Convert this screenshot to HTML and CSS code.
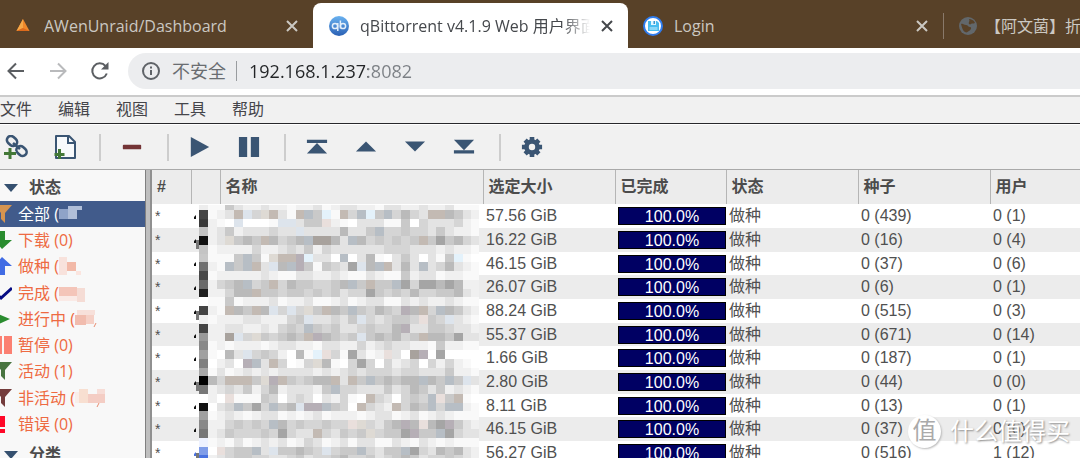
FILE: index.html
```html
<!DOCTYPE html>
<html lang="zh-CN">
<head>
<meta charset="utf-8">
<title>qBittorrent v4.1.9 Web 用户界面</title>
<link rel="stylesheet" href="styles.css">
</head>
<body>
<div class="app">
<header class="tabs">
  <div class="tab tab-first">
    <svg class="fav" viewBox="0 0 20 20"><path d="M10 3 16.500 15H3.500Z" fill="#f0882a"/><path d="M10 3v9l-6.500 3Z" fill="#f7a848"/><path d="M3.500 15 10 12l6.500 3Z" fill="#dc6a1c"/></svg>
    <span class="tab-title">AWenUnraid/Dashboard</span>
    <button class="close" aria-label="关闭"><svg viewBox="0 0 12 12"><path d="M1 1l10 10M11 1 1 11"/></svg></button>
  </div>
  <div class="tab tab-active">
    <svg class="fav" viewBox="0 0 20 20"><defs><linearGradient id="qb" x2="0" y2="1"><stop stop-color="#6ab2f0"/><stop offset="1" stop-color="#2a60b4"/></linearGradient></defs><circle cx="10" cy="10" r="10" fill="url(#qb)"/><g fill="none" stroke="#e4effa" stroke-width="1.500"><circle cx="6" cy="10" r="2.600"/><path d="M8.800 7v8M11.400 4.500v8"/><circle cx="14" cy="10" r="2.600"/></g></svg>
    <span class="tab-title">qBittorrent v4.1.9 Web 用户界面</span>
    <button class="close" aria-label="关闭"><svg viewBox="0 0 12 12"><path d="M1 1l10 10M11 1 1 11"/></svg></button>
  </div>
  <div class="tab tab-login">
    <svg class="fav" viewBox="0 0 20 20"><circle cx="10" cy="10" r="9" fill="#fff" stroke="#2f7df0" stroke-width="2"/><path d="M5 5h9l2 2v8H5Z" fill="#48bdf0"/><path d="M8 5h5v4H8Z" fill="#e4f6ff"/><path d="M10.500 5h1.500v3h-1.500Z" fill="#3796cf"/><path d="M6.500 11h8v3h-8Z" fill="#8ad7f7"/></svg>
    <span class="tab-title">Login</span>
    <button class="close" aria-label="关闭"><svg viewBox="0 0 12 12"><path d="M1 1l10 10M11 1 1 11"/></svg></button>
  </div>
  <div class="tab tab-last">
    <svg class="fav" viewBox="0 0 20 20"><circle cx="10" cy="10" r="9" fill="#62676b"/><path d="M3 8c2-1 3 1 5 1s2 2 4 2 1 3-1 4-2 2-4 1-3-4-4-8M11 3c2 0 5 1 6 4-2 1-3 0-4 1s-3 0-2-2 0-2 0-3" fill="#584128"/></svg>
    <span class="tab-title">【阿文菌】折腾</span>
  </div>
</header>
<div class="nav">
  <button class="nav-btn" aria-label="后退"><svg viewBox="0 0 20 20"><path d="M18 10H3M10 2.500 2.500 10l7.500 7.500"/></svg></button>
  <button class="nav-btn nav-off" aria-label="前进"><svg viewBox="0 0 20 20"><path d="M2 10h15M10 2.500l7.500 7.500-7.500 7.500"/></svg></button>
  <button class="nav-btn" aria-label="刷新"><svg viewBox="0 0 20 20"><path d="M16.800 12.500A7.500 7.500 0 1 1 15.500 5"/><path d="M18.500 1v7.500H11Z" class="solid"/></svg></button>
  <div class="address">
    <svg class="info" viewBox="0 0 18 18"><circle cx="9" cy="9" r="8"/><path d="M9 8v5M9 4.500v2"/></svg>
    <label class="insecure" for="url">不安全</label>
    <input class="url" id="url" type="text" value="192.168.1.237:8082">
  </div>
</div>
<nav class="menu">
  <button>文件</button><button>编辑</button><button>视图</button><button>工具</button><button>帮助</button>
</nav>
<div class="tools">
  <button class="tool" aria-label="添加链接"><svg viewBox="0 0 24 24"><g fill="none" stroke="#3a5573" stroke-width="2.600"><rect x="2.500" y="2" width="11" height="8" rx="4" transform="rotate(42 8 6)"/><rect x="12" y="12" width="11" height="8" rx="4" transform="rotate(42 17.500 16)"/><path d="m9 8 7 6"/></g><path d="M6 13v12M0 19h12" stroke="#f1f1f1" stroke-width="5"/><path d="M6 13v11M0 18.500h12" stroke="#437837" stroke-width="3"/></svg></button>
  <button class="tool" aria-label="添加文件"><svg viewBox="0 0 24 24"><path d="M3 1h13l6 6v16H3Z" fill="#f7f9fb" stroke="#3a5573" stroke-width="2" stroke-linejoin="round"/><path d="M15 1v7h7" fill="none" stroke="#3a5573" stroke-width="2"/><path d="M6.500 14v10M1.500 19.500h10" stroke="#437837" stroke-width="3"/></svg></button>
  <span class="sep"></span>
  <button class="tool" aria-label="删除"><svg viewBox="0 0 24 24"><rect x="2" y="9.500" width="20" height="5" rx="1" fill="#743436"/></svg></button>
  <span class="sep"></span>
  <button class="tool" aria-label="开始"><svg viewBox="0 0 24 24"><path d="M2 1v22l20-11Z"/></svg></button>
  <button class="tool" aria-label="暂停"><svg viewBox="0 0 24 24"><path d="M1 1h9v22H1zM14 1h9v22h-9z"/></svg></button>
  <span class="sep"></span>
  <button class="tool" aria-label="置顶"><svg viewBox="0 0 24 24"><path d="M1 4h22v3.500H1zM12 7.500 23 19H1Z"/></svg></button>
  <button class="tool" aria-label="上移"><svg viewBox="0 0 24 24"><path d="M12 6 23 17H1Z"/></svg></button>
  <button class="tool" aria-label="下移"><svg viewBox="0 0 24 24"><path d="M12 17 23 6H1Z"/></svg></button>
  <button class="tool" aria-label="置底"><svg viewBox="0 0 24 24"><path d="M1 15.500h22V19H1zM12 15.500 23 4H1Z"/></svg></button>
  <span class="sep"></span>
  <button class="tool" aria-label="设置"><svg viewBox="0 0 24 24"><circle cx="12" cy="12" r="6" fill="none" stroke="#3a5573" stroke-width="5"/><path d="M12 1v4M12 19v4M1 12h4M19 12h4M4.500 4.500l2.500 2.500M17 17l2.500 2.500M19.500 4.500 17 7M7 17l-2.500 2.500" stroke="#3a5573" stroke-width="5"/></svg></button>
</div>
<main class="main">
  <aside class="side">
    <h2 class="group"><svg viewBox="0 0 14 8"><path d="M0 0h14L7 8Z"/></svg>状态</h2>
    <ul class="filters">
      <li><a class="on" href="#"><svg class="ico" viewBox="0 0 12 18"><path d="M-6 0h18L5 8v10l-4-4V8Z" fill="#d59450"/></svg>全部 (<svg class="mask" viewBox="0 0 40 18"><path d="M0 4h18v10H0z" fill="#8fa3c8"/><path d="M9 1h14v4h-5v9H9z" fill="#b0bed8"/></svg></a></li>
      <li><a href="#"><svg class="ico" viewBox="0 0 12 18"><path d="M-1 0h6v9h7L2 18l-8-9h5Z" fill="#2a8c2f"/></svg>下载 (0)</a></li>
      <li><a href="#"><svg class="ico" viewBox="0 0 12 18"><path d="M-1 18h6V9h7L2 0l-8 9h5Z" fill="#416ce4"/></svg>做种 (<svg class="mask" viewBox="0 0 40 18"><path d="M-2 0h10v18H-2z" fill="#f8e2dc"/><path d="M8 5h9v9H8z" fill="#f2b9a8"/><path d="M17 14h5v4h-5z" fill="#fbe5df"/></svg></a></li>
      <li><a href="#"><svg class="ico" viewBox="0 0 12 18"><path d="M-4 10 1 14 12 4" fill="none" stroke="#060c83" stroke-width="3"/></svg>完成 (<svg class="mask" viewBox="0 0 40 18"><path d="M0 3h18v9H0z" fill="#f4c5b9"/><path d="M18 4h8v14h-8z" fill="#f5dcd5"/><path d="M0 12h18v5H0z" fill="#faeae6"/></svg></a></li>
      <li><a href="#"><svg class="ico" viewBox="0 0 12 18"><path d="M-6 2 10 9-6 16Z" fill="#2a8c2f"/></svg>进行中 (<svg class="mask" viewBox="0 0 40 18"><path d="M2 0h18v5H2z" fill="#f7e0da"/><path d="M0 5h11v10H0z" fill="#f1bcae"/><path d="M11 5h8v9h-8z" fill="#f5d0c6"/><path d="M19 17l2-4" stroke="#e88c70"/></svg></a></li>
      <li><a href="#"><svg class="ico" viewBox="0 0 12 18"><path d="M-4 0h6v18h-6zM4 0h8v18H4z" fill="#fb8072"/></svg>暂停 (0)</a></li>
      <li><a href="#"><svg class="ico" viewBox="0 0 12 18"><path d="M-6 0h18L5 8v10l-4-4V8Z" fill="#487440"/></svg>活动 (1)</a></li>
      <li><a href="#"><svg class="ico" viewBox="0 0 12 18"><path d="M-6 0h18L5 8v10l-4-4V8Z" fill="#743c3c"/></svg>非活动 (<svg class="mask" viewBox="0 0 40 18"><path d="M-2 3h6v11h-6z" fill="#faeee9"/><path d="M4 0h9v14H4z" fill="#f8dfd1"/><path d="M13 5h17v9H13z" fill="#f4cdc4"/><path d="M22 0h8v5h-8z" fill="#f7ddd7"/><path d="M22 18l2-4" stroke="#e88c70"/></svg></a></li>
      <li><a href="#"><svg class="ico" viewBox="0 0 12 18"><path d="M0 1h5v11H0zM0 14h5v4H0z" fill="#ff0828"/></svg>错误 (0)</a></li>
    </ul>
    <h2 class="group"><svg viewBox="0 0 14 8"><path d="M0 0h14L7 8Z"/></svg>分类</h2>
  </aside>
  <div class="handle"></div>
  <section class="list">
    <table class="grid">
      <colgroup><col class="c-num"><col class="c-icon"><col class="c-name"><col class="c-size"><col class="c-done"><col class="c-state"><col class="c-seeds"><col class="c-peers"></colgroup>
      <thead><tr><th>#</th><th></th><th>名称</th><th>选定大小</th><th>已完成</th><th>状态</th><th>种子</th><th>用户</th></tr></thead>
      <tbody id="rows"></tbody>
    </table>
    <svg class="mosaic" id="mosaic" viewBox="0 0 286 255" aria-hidden="true"></svg>
  </section>
</main>
<div class="stamp"><span class="seal">值</span><span>什么值得买</span></div>
</div>
<script src="app.js"></script>
</body>
</html>
```
FILE: styles.css
```css
* { box-sizing: border-box; }
body {
  margin: 0;
  font-family: "Liberation Sans", "Noto Sans CJK SC", sans-serif;
  font-size: 16px;
  color: #505050;
}
button { border: 0; padding: 0; background: none; font: inherit; color: inherit; }
svg { display: block; flex: none; }
.app { position: relative; display: flex; flex-direction: column; height: 100vh; overflow: hidden; background: #f1f1f1; }

.tabs { display: flex; flex: none; height: 48px; padding-top: 3px; background: #584128; overflow: hidden; }
.tab { display: flex; align-items: center; flex: none; padding: 0 15px; gap: 11px; color: #cbc8c2; font-family: "Open Sans", "Noto Sans CJK SC", sans-serif; }
.tab-first { width: 313px; padding-left: 13px; }
.tab-active { width: 315px; padding-left: 16px; background: #fff; border-radius: 8px 8px 0 0; color: #45484c; }
.tab-login { width: 315px; }
.tab-last { position: relative; flex: 1; min-width: 0; padding: 0 0 0 15px; }
.tab-last::before { content: ""; position: absolute; left: 0; top: 10px; width: 1px; height: 26px; background: #89796a; }
.tab-title { flex: 1; min-width: 0; overflow: hidden; white-space: nowrap; line-height: 24px; }
.tab-active .tab-title { mask-image: linear-gradient(to right, #000 88%, transparent); }
.tab-last .tab-title { margin-left: -4px; }
.fav { width: 20px; height: 20px; }
.close svg { width: 12px; height: 12px; fill: none; stroke: currentColor; stroke-width: 2; }

.nav { display: flex; align-items: center; flex: none; height: 49px; padding: 0 0 1px 6px; background: #fff; border-bottom: 2px solid #cbcbcb; }
.nav-btn { width: 20px; margin-right: 22px; color: #5b5e62; }
.nav-btn svg { width: 20px; height: 20px; fill: none; stroke: currentColor; stroke-width: 2; }
.nav-btn .solid { fill: currentColor; stroke: none; }
.nav-off { color: #b9babc; }
.nav-btn:nth-child(3) { margin-right: 18px; }
.address { display: flex; align-items: center; flex: 1; height: 36px; padding-left: 14px; border-radius: 18px 0 0 18px; background: #ecedef; font-family: "Open Sans", "Noto Sans CJK SC", sans-serif; font-size: 18px; }
.info { width: 18px; height: 18px; margin-right: 12px; fill: none; stroke: #5f6368; stroke-width: 2; }
.insecure { padding-right: 10px; border-right: 1px solid #999c9f; line-height: 20px; color: #6a6d71; }
.url {
  flex: 1; min-width: 0; margin-left: 12px; border: 0; padding: 0; outline: 0; font: inherit;
  color: transparent;
  background: linear-gradient(to right, #222426 119px, #7b7f84 119px);
  background-clip: text;
}

.menu { display: flex; flex: none; gap: 26px; height: 27px; border-bottom: 1px solid #28282b; line-height: 26px; color: #45454a; }
.tools { display: flex; align-items: center; flex: none; height: 46px; padding: 0 4px; border-top: 1px solid #fff; border-bottom: 1px solid #a9a9a9; }
.tool { width: 24px; margin-right: 25px; }
.tool svg { width: 22px; height: 22px; fill: #3a5573; }
.tool:first-child svg, .tool:nth-child(2) svg { width: 24px; height: 24px; }
.sep { width: 2px; height: 27px; margin: 0 20px 0 -3px; background: #cdcdcd; }

.main { display: flex; flex: 1; min-height: 0; overflow: hidden; }
.side { flex: none; width: 145px; background: #f8f8f8; }
.group { display: flex; align-items: center; gap: 11px; margin: 0; padding: 4px 0 0 4px; height: 31px; font-size: 16px; line-height: 24px; color: #4c4c4c; }
.group svg { width: 14px; height: 8px; fill: #35506f; }
.filters { margin: 0; padding: 0; list-style: none; }
.filters a { display: flex; align-items: center; height: 26px; line-height: 24px; padding-bottom: 1px; white-space: pre; color: #ee6a42; text-decoration: none; font-family: "Open Sans", "Noto Sans CJK SC", sans-serif; }
.filters li:nth-child(4n) { padding-top: 1px; }
.filters .on { background: #415b8b; color: #fff; }
.ico { width: 12px; height: 18px; margin-right: 6px; }
.mask { width: 40px; height: 18px; }
.handle { flex: none; width: 7px; background: #bfbfbf; border-left: 1px solid #808080; border-right: 2px solid #909090; }

.list { position: relative; flex: 1; min-width: 0; background: #fff; }
.grid { width: 100%; table-layout: fixed; border-collapse: collapse; }
.c-num { width: 39px; }
.c-icon { width: 29px; }
.c-name { width: 263px; }
.c-size { width: 132px; }
.c-done { width: 111px; }
.c-state, .c-seeds { width: 132px; }
.grid th { height: 34px; padding: 0 5px; border-right: 1px solid #b5b5b5; background: #ececec; text-align: left; line-height: 24px; color: #4c4c4c; }
.grid th:last-child { border-right: 0; }
.grid td { height: 24px; padding: 0 3px; line-height: 22px; white-space: nowrap; }
.grid tr:nth-child(3n) td { height: 23px; }
.grid tbody tr:nth-child(even) { background: #ececec; }
.grid td:first-child { font-size: 14px; }
.grid td:nth-child(5) { padding-right: 0; }
.bar { height: 18px; border: 1px solid #000; background: #000063; color: #fff; line-height: 17px; text-align: center; }
.mosaic { position: absolute; left: 41px; top: 35px; width: 286px; height: 255px; }

.stamp { position: absolute; right: 10px; bottom: 10px; display: flex; align-items: center; gap: 9px; color: #fff; font-size: 24px; line-height: 32px; text-shadow: 1px 1px 2px #8c8c8c; }
.seal { width: 33px; height: 33px; border-radius: 50%; background: #fff; color: #aaa; text-align: center; text-shadow: none; box-shadow: 1px 1px 2px #bbb; }
```
FILE: app.js
```js
const torrents = [
  ["57.56 GiB", "0 (439)", "0 (1)"],
  ["16.22 GiB", "0 (16)", "0 (4)"],
  ["46.15 GiB", "0 (37)", "0 (6)"],
  ["26.07 GiB", "0 (6)", "0 (1)"],
  ["88.24 GiB", "0 (515)", "0 (3)"],
  ["55.37 GiB", "0 (671)", "0 (14)"],
  ["1.66 GiB", "0 (187)", "0 (1)"],
  ["2.80 GiB", "0 (44)", "0 (0)"],
  ["8.11 GiB", "0 (13)", "0 (1)"],
  ["46.15 GiB", "0 (37)", "0 (6)"],
  ["56.27 GiB", "0 (516)", "1 (12)"]
];
document.getElementById("rows").innerHTML = torrents.map(([size, seeds, peers]) =>
  `<tr><td>*</td><td></td><td></td><td>${size}</td><td><div class="bar">100.0%</div></td><td>做种</td><td>${seeds}</td><td>${peers}</td></tr>`
).join("");

// Name column privacy tiles: one letter per tile, one string per tile row.
const tones = {
  w: "#ffffff", a: "#f9f9f9", b: "#f0f0f0", c: "#e3e3e3", d: "#d5d5d5", e: "#c9c9c9", f: "#bababa", g: "#a5a5a5",
  k: "#dde4ec", l: "#e9dfdc", m: "#c3bab3", n: "#b7bec5", y: "#e4f2fb", p: "#b6afb6", t: "#dedad4", o: "#a8a29d"
};
const iconTones = ["#ededed", "#444", "#3a3a3a", "#c4c4c4", "#111", "#c4c4c4", "#c8c8c8", "#707070", "#484848", "#6a6a6a", "#202020", "#fff", "#444", "#f0f0f0", "#444", "#999", "#888", "#a0a0a0", "#808080", "#a8a8a8", "#000", "#777", "#fff", "#111", "#a0a0a0", "#888", "#777", "#eef2ff", "#809de8", "#4a72e0"];
const tiles = [
  "aaecbbcbbabbcabccbbaccbbcbbcaaa",
  "abcmkdtmcamneyamdnyendfdcmmfecb",
  "bawkwwwakkceelbawcccaaewdcccdba",
  "bcebcccdcckccccfccenddeddcecbba",
  "bctefemfdefnoofcnfdededemegefdc",
  "abbbbdbbcdcebdccccccdddcccbcbba",
  "aaaeneatmmpyccwnwcfawcecwcaeyaw",
  "banenmckfnpeaedcgkfnmcfcncdfcba",
  "abbbbbcbaaccbbcbaacbaaebccabbaa",
  "bdefndemdfeeddefnemeengdggfgfbb",
  "bbdffmeedeededecddgededfddeefcb",
  "aaeabbbcabbcaabcabccaacbcbbcbaa",
  "bamfemfkdkdtemfenedfedpfmdnfecb",
  "abbbccbbbdekccdcekdcdeedledkcba",
  "bbccbbcbdednedeccdeddfpcceedccb",
  "bbokdtedefempfedekefefdemffegcc",
  "ababbbabccbbaccbbdbcdccbbaebbaa",
  "awfckdedbwfayldagcablcwopwgwwww",
  "wbcwpncmdwadtfawdgdwdbcdwdbdbaw",
  "acabcbcbccccbcbcdcdddcddcccebba",
  "fdmmmetpmedeffmcmenefeffnfenekc",
  "bcdcebdfbcccbenddcccecdfecebcba",
  "bwlaaaedwcdcwcbdawmdcwdednlemaw",
  "wcdnegdnefkppnedwmdcbmdfendnnba",
  "abcbabccababcabbbabccabcabcbaaa",
  "bbdedednfdeddeddltdcefpflfgpecb",
  "bcedddedgdccmdcedetdeegpeengdcc",
  "abacabcbcabdcabcaccaacbacbabaaa",
  "wldeenckeefedkdeendceengdcfefcb",
  "bcdeeddccdecddefddecdefecddedcb"
];
const tileW = 9, tileH = 9;
const rowStep = 877, colStep = 879;
let art = "";
const at = (i, step, first) => Math.max(0, Math.round(i * step / 100) - first);
const tile = (x, y, x2, y2, fill) => { art += `<rect x="${x}" y="${y}" width="${x2 - x}" height="${y2 - y}" fill="${fill}"/>`; };
tiles.forEach((line, r) => {
  const y = at(r, rowStep, 4), y2 = at(r + 1, rowStep, 4);
  tile(6, y, 6 + tileW, y2, iconTones[r]);
  [...line].forEach((key, c) => tile(6 + at(c + 1, colStep, 0), y, 6 + at(c + 2, colStep, 0), y2, tones[key]));
});
for (let i = 0; i < torrents.length; i++) {
  const y = 11 + Math.round(i * 237 / 10);
  art += `<path d="M1 ${y + 3}v-2l2-2v4Z" fill="${i === 10 ? "#4a72e0" : "#111"}"/>`;
  if (i % 3 === 1) tile(3, y, 6, y + tileH, "#777");
}
document.getElementById("mosaic").innerHTML = art;
```
